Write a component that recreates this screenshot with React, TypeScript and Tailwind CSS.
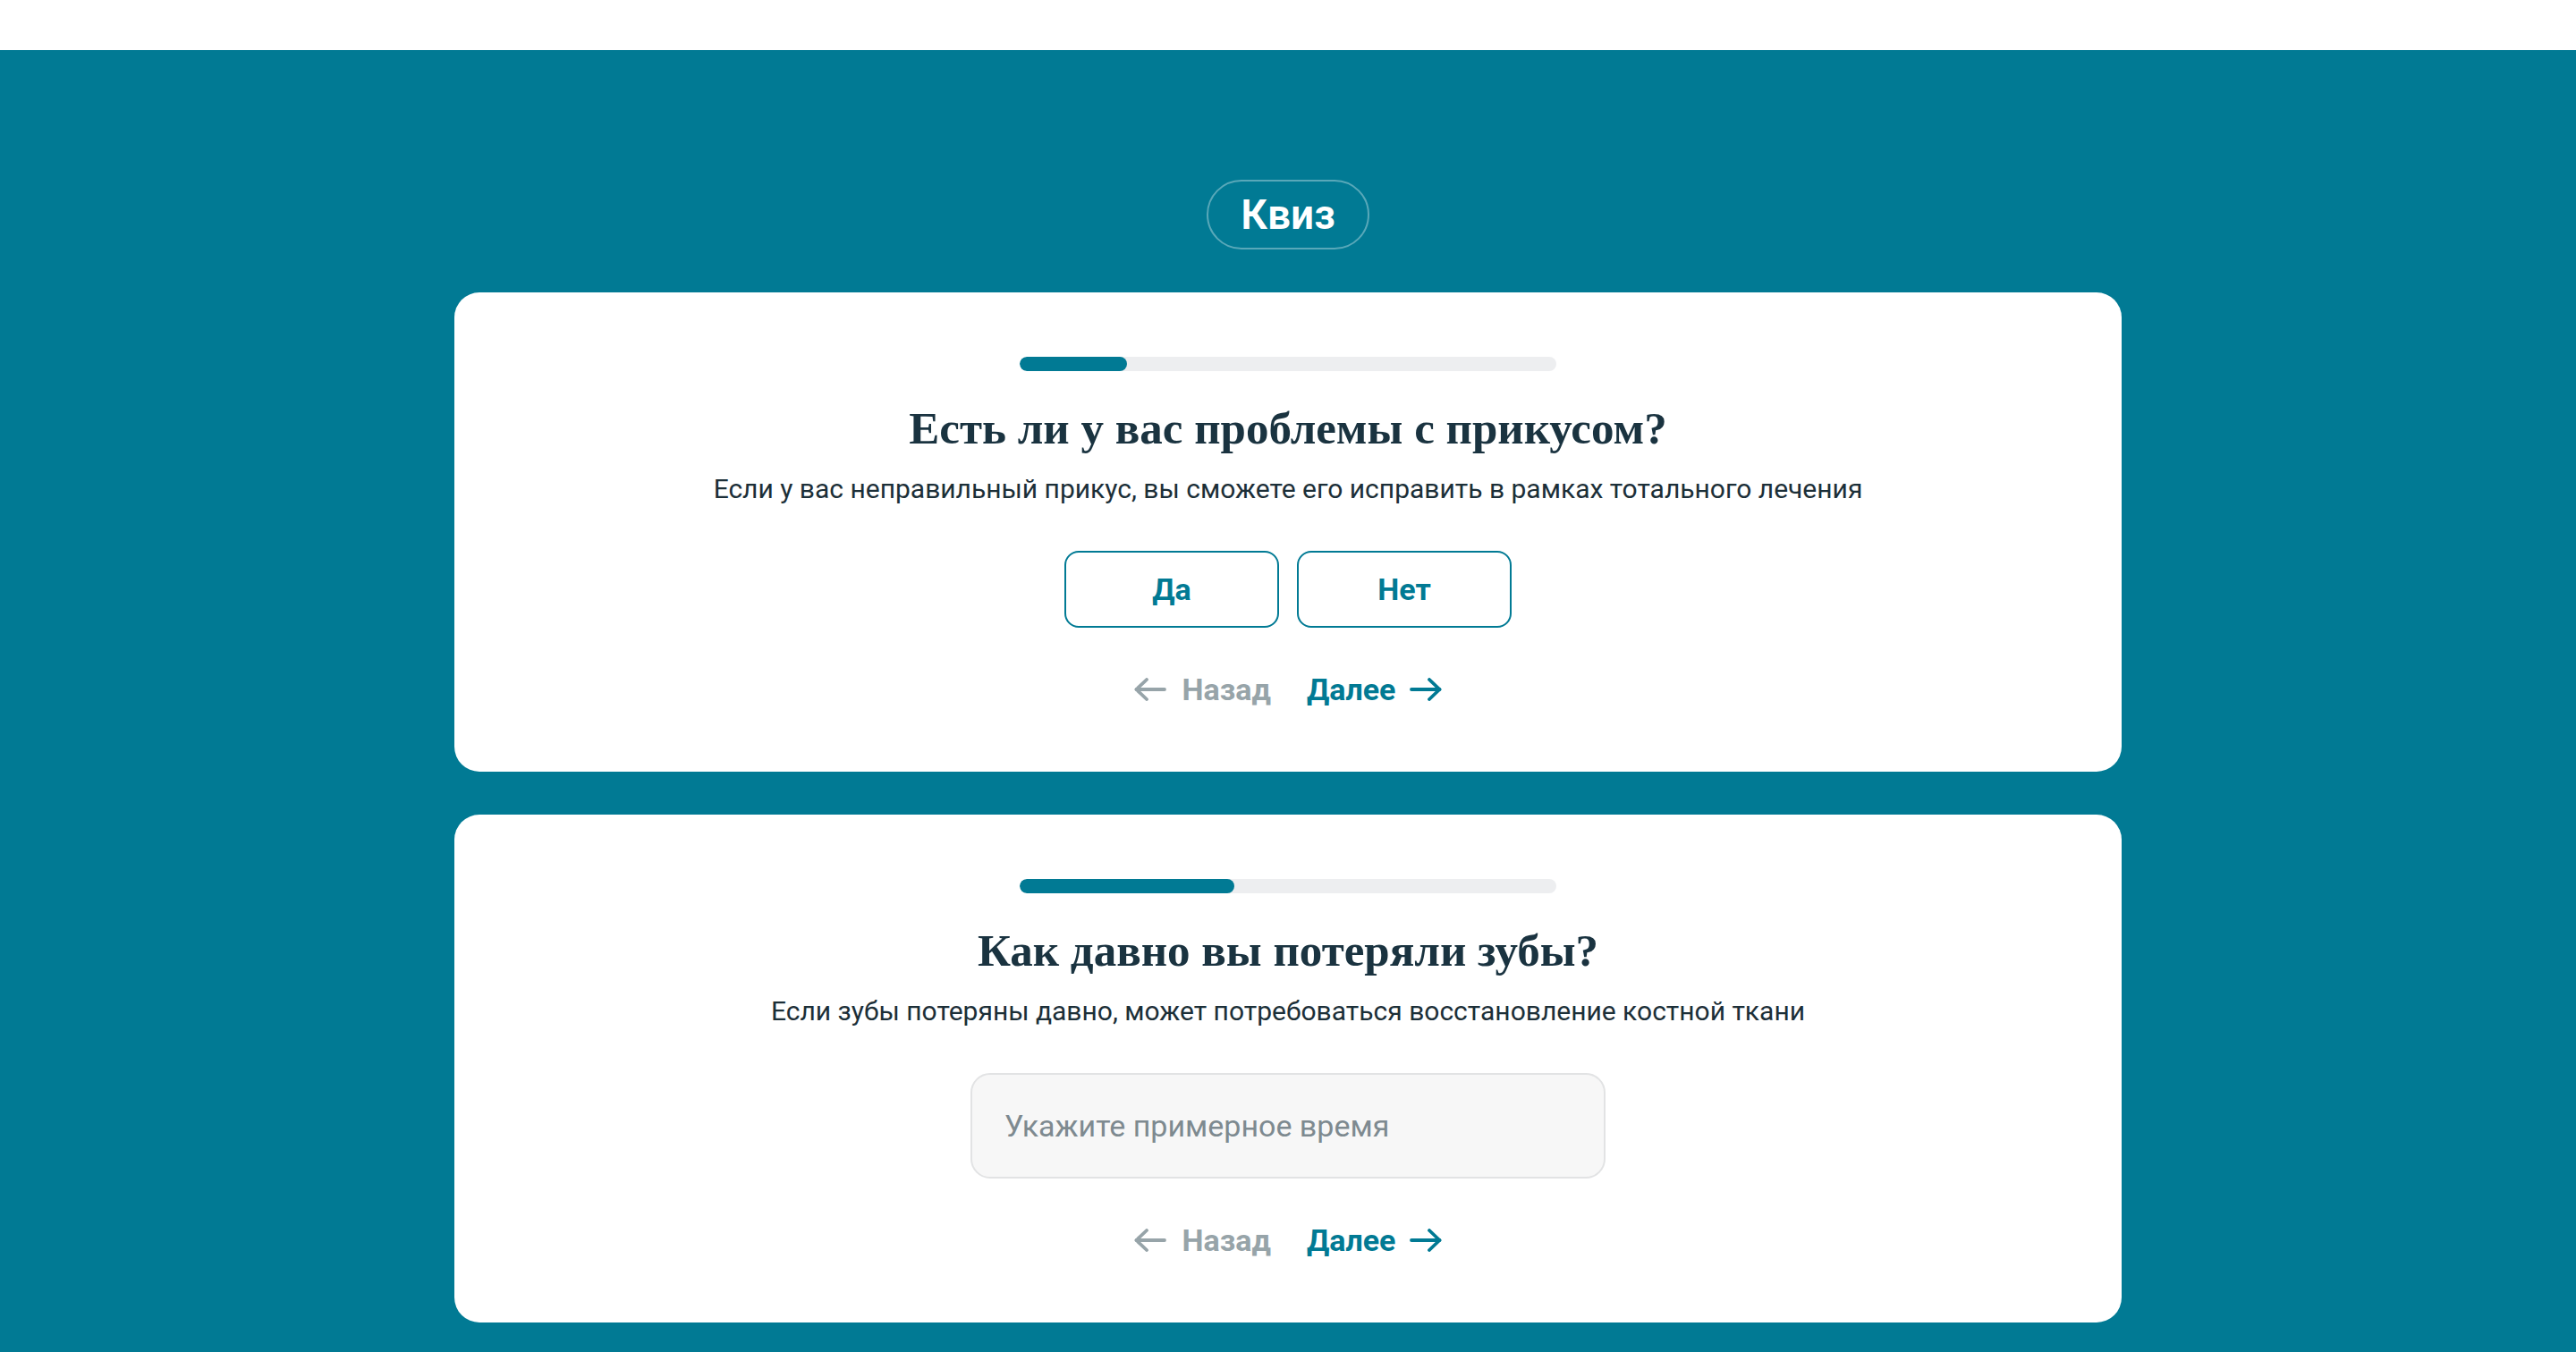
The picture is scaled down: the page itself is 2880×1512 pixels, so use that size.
import * as React from 'react';

const ArrowIcon: React.FC<{ dir: 'left' | 'right' }> = ({ dir }) => (
    <svg width="36" height="26" viewBox="0 0 36 26" fill="none" stroke="currentColor" strokeWidth="3.8" strokeLinecap="round" strokeLinejoin="round" className={dir === 'right' ? 'rotate-180' : ''}>
        <path d="M34 13H2.5" />
        <path d="M14 2 2.5 13 14 24" />
    </svg>
);

const ProgressBar: React.FC<{ percent: number }> = ({ percent }) => (
    <div className="w-[600px] h-4 rounded-full bg-[#edeef0] overflow-hidden">
        <div className="h-full rounded-full bg-[#017a94]" style={{ width: `${percent}%` }}></div>
    </div>
);

const QuizNav: React.FC = () => (
    <div className="flex items-center justify-center gap-10 h-10 mt-[49px] text-[34px] font-bold leading-10">
        <button type="button" className="flex items-center gap-[18px] text-[#97a4a9]">
            <ArrowIcon dir="left" />
            <span>Назад</span>
        </button>
        <button type="button" className="flex items-center gap-4 text-[#017a94]">
            <span>Далее</span>
            <ArrowIcon dir="right" />
        </button>
    </div>
);

const QuizCard: React.FC<{ percent: number; title: string; hint: string; children: React.ReactNode }> = ({ percent, title, hint, children }) => (
    <div className="w-[1864px] bg-white rounded-[28px] py-[72px] flex flex-col items-center">
        <ProgressBar percent={percent} />
        <h2 className="mt-[34px] text-[51px] leading-[60px] font-bold text-[#1a3340]" style={{ fontFamily: '"Liberation Serif", serif' }}>
            {title}
        </h2>
        <p className="mt-5 text-[30px] leading-9 text-[#1c2f38]">{hint}</p>
        <div className="mt-[51px]">{children}</div>
        <QuizNav />
    </div>
);

export default function App() {
    const [answer, setAnswer] = React.useState<string | null>(null);
    const [time, setTime] = React.useState('');

    const optionClasses = "w-[240px] h-[86px] rounded-2xl border-2 border-[#017a94] text-[34px] font-bold text-[#017a94] bg-white";

    return (
        <div className="min-h-screen bg-white" style={{ fontFamily: 'Roboto, "Noto Sans", sans-serif' }}>
            <div className="h-14 bg-white"></div>
            <section className="bg-[#017a94] pt-[145px] pb-16 flex flex-col items-center">
                <div className="h-[78px] px-[36px] rounded-full border-2 border-white/35 flex items-center text-white text-[46px] font-semibold leading-none">
                    Квиз
                </div>
                <div className="mt-12 flex flex-col gap-12">
                    <QuizCard percent={20} title="Есть ли у вас проблемы с прикусом?" hint="Если у вас неправильный прикус, вы сможете его исправить в рамках тотального лечения">
                        <div className="flex gap-5">
                            {['Да', 'Нет'].map(opt => (
                                <button key={opt} type="button" onClick={() => setAnswer(opt)} className={`${optionClasses} ${answer === opt ? 'bg-[#e6f2f4]' : ''}`}>
                                    {opt}
                                </button>
                            ))}
                        </div>
                    </QuizCard>
                    <QuizCard percent={40} title="Как давно вы потеряли зубы?" hint="Если зубы потеряны давно, может потребоваться восстановление костной ткани">
                        <input
                            type="text"
                            value={time}
                            onChange={e => setTime(e.target.value)}
                            placeholder="Укажите примерное время"
                            className="w-[710px] h-[118px] rounded-[22px] border-2 border-[#e2e3e4] bg-[#f7f7f7] px-[36px] text-[34px] text-[#1c2f38] placeholder:text-[#7e8a90] outline-none"
                        />
                    </QuizCard>
                </div>
            </section>
        </div>
    );
}
